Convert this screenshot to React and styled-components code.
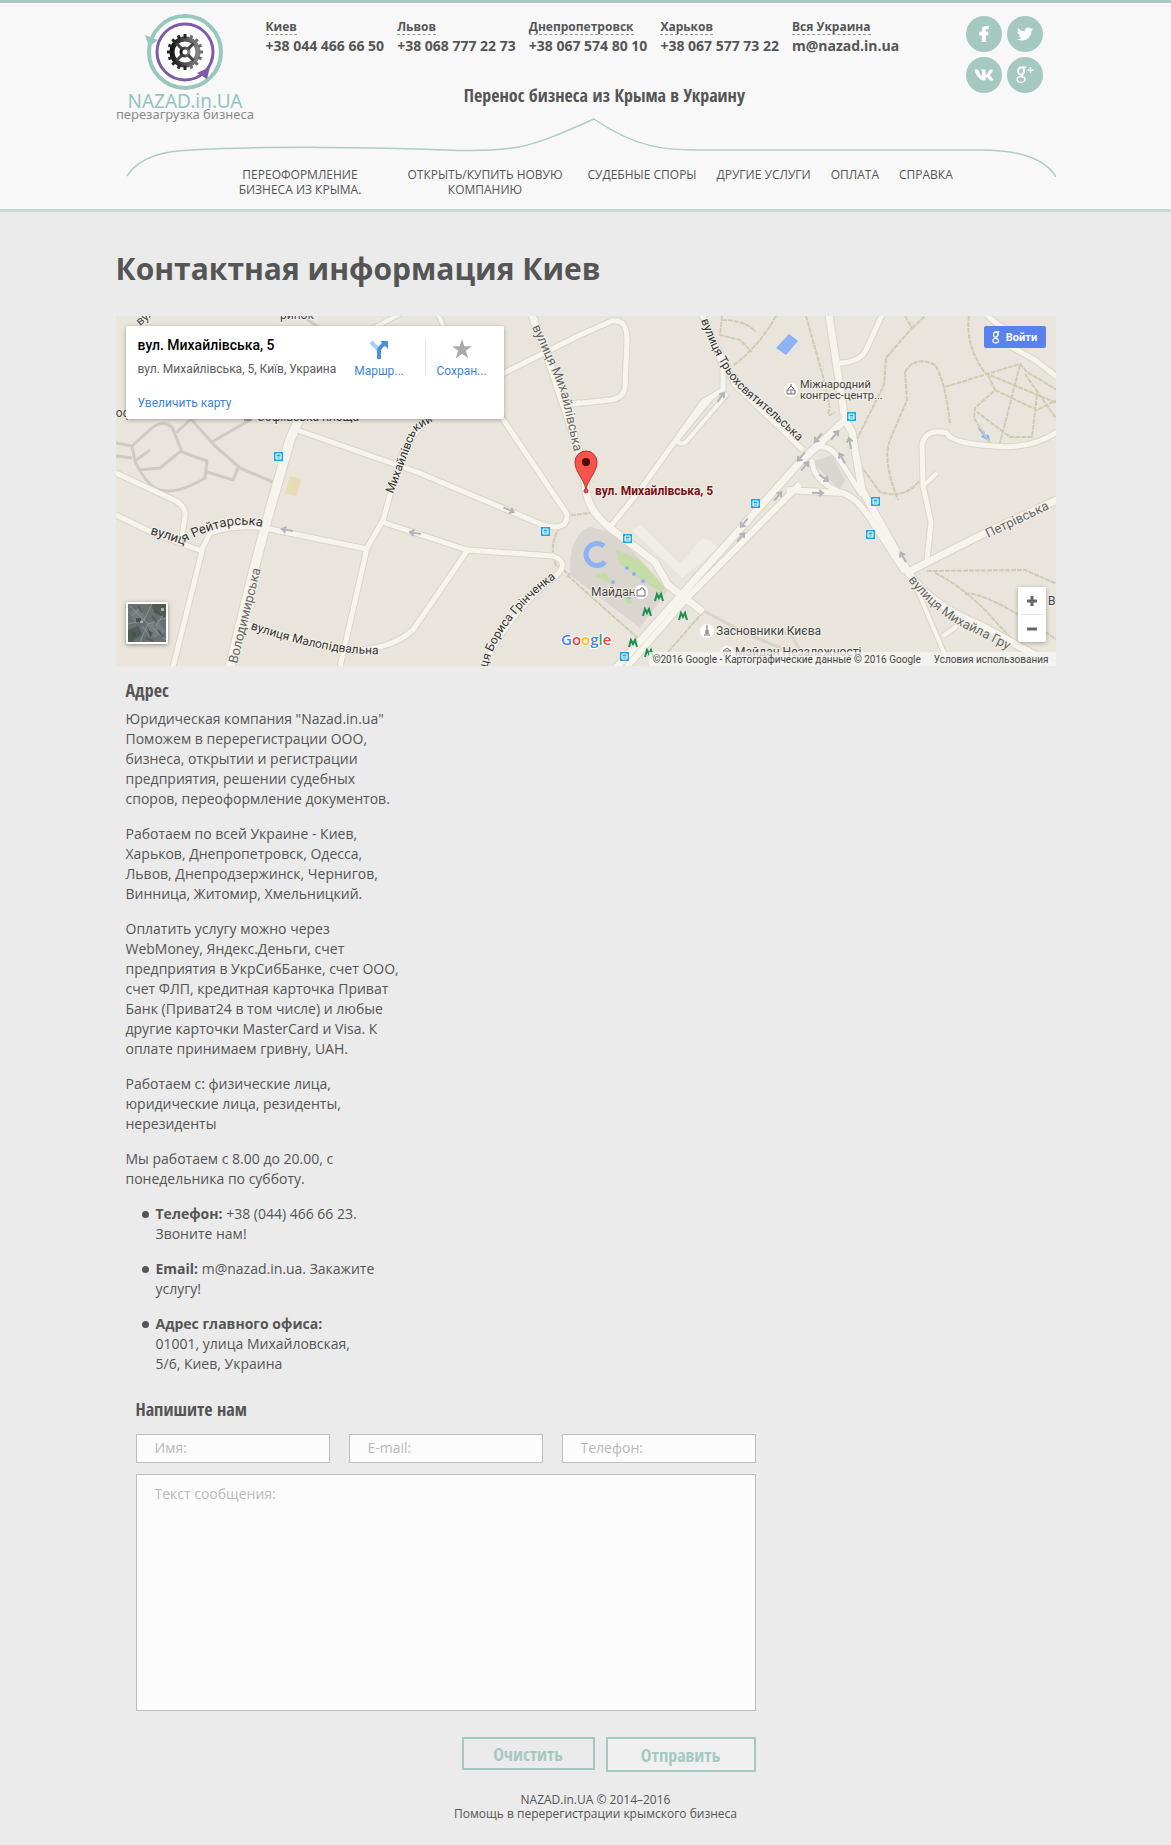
// React
import React, { useState } from 'react'

// npm packages
import styled, { createGlobalStyle, css } from 'styled-components'
import { FaFacebookF, FaTwitter, FaVk } from 'react-icons/fa'

const GlobalStyle = createGlobalStyle`
:root {
    --green: #a5c9c1;
    --text: #555;
    --page: #ebebeb;
    --sans: 'Open Sans', 'Noto Sans', sans-serif;
    --narrow: 'Open Sans Condensed', 'Liberation Sans Narrow', 'DejaVu Sans Condensed', 'Open Sans', sans-serif;
    --map: Roboto, 'Liberation Sans', sans-serif;
}
* {
    box-sizing: border-box;
}
body {
    margin: 0;
    background-color: var(--page);
    color: var(--text);
    font-family: var(--sans);
    font-size: 14px;
    line-height: 20px;
}
a {
    color: inherit;
    text-decoration: none;
}
h1, h2, p, ul {
    margin: 0;
    padding: 0;
}
`

const container = css`
width: 100%;
max-width: 940px;
margin: 0 auto;
`

const StyledHeader = styled.header`
border-top: 3px solid var(--green);
border-bottom: 3px solid #c8dad6;
background-color: #f8f8f8;
box-shadow: inset 0 2px #fff, inset 0 3px #ececec;
`
const Top = styled.div`
${container}
display: flex;
align-items: flex-start;
height: 114px;
padding: 10px 13px 0 3px;
`
const LogoLink = styled.a`
display: block;
flex: none;
width: 132px;

svg {
    display: block;
    width: 100%;
    overflow: visible;
}
`
const Middle = styled.div`
display: flex;
flex-direction: column;
align-items: center;
padding-left: 15px;
`
const Contacts = styled.ul`
display: flex;
gap: 13px;
list-style: none;
`
const Contact = styled.li`
font-size: 14px;
font-weight: 700;
white-space: nowrap;

span {
    display: table;
    border-bottom: 1px dashed #999;
    margin-top: 6px;
    font-size: 12px;
    line-height: 15px;
}
a {
    display: block;
    line-height: 22px;
}
`
const Tagline = styled.p`
margin-top: 26px;
padding-left: 44px;
font-family: var(--narrow);
font-size: 18px;
font-weight: 700;
line-height: 24px;
`
const Social = styled.div`
display: grid;
grid-template-columns: 36px 36px;
gap: 5px;
margin-left: auto;
padding-top: 3px;

a {
    display: flex;
    align-items: center;
    justify-content: center;
    height: 36px;
    border-radius: 50%;
    background-color: var(--green);
    color: #fff;
}
`
const Curve = styled.svg`
${container}
display: block;
height: 60px;
`
// The first line of the menu sits inside the ends of the curve
const Menu = styled.nav`
${container}
display: flex;
gap: 20px;
height: 42px;
margin-top: -10px;
padding-left: 102px;
font-size: 12px;
line-height: 15px;
text-align: center;
text-transform: uppercase;
white-space: nowrap;

a:hover {
    color: #7fb3a8;
}
`
const MenuLink = styled.a`
${({ $wide }) => $wide && css`
width: 165px;
padding: 0 4px;
white-space: normal;
`}
`

const Main = styled.main`
${container}
`
const Title = styled.h1`
padding: 37px 0 27px;
font-size: 30px;
font-weight: 700;
line-height: 40px;
`
const MapBox = styled.section`
position: relative;
height: 350px;
overflow: hidden;
background-color: #e9e5dc;
font-family: var(--map);
`
const MapCanvas = styled.svg`
display: block;
width: 100%;
height: 100%;
`
const Card = styled.div`
position: absolute;
top: 10px;
left: 10px;
display: flex;
width: 378px;
height: 93px;
padding: 9px 0 0 12px;
border-radius: 2px;
background-color: #fff;
box-shadow: 0 1px 4px rgba(0, 0, 0, 0.3);
font-size: 12px;
white-space: nowrap;
`
const Place = styled.div`
display: flex;
flex-direction: column;
width: 216px;

strong {
    color: #000;
    font-size: 14px;
    font-weight: 500;
}
span {
    margin-top: 4px;
    color: #5b5b5b;
}
a {
    margin-top: 14px;
    color: #3f83d6;
}
`
const CardAction = styled.button`
display: flex;
flex-direction: column;
align-items: center;
width: 72px;
height: 36px;
margin-top: 4px;
padding: 0;
border: 0;
background: none;
color: #3f83d6;
font-family: var(--map);
font-size: 12px;
line-height: 20px;
cursor: pointer;

${({ $divided }) => $divided && css`
padding-right: 20px;
border-right: 1px solid #e5e5e5;
`}

svg {
    flex: none;
    width: 20px;
    height: 20px;
    margin-bottom: 2px;
}
`
const SignIn = styled.button`
position: absolute;
top: 10px;
right: 10px;
display: flex;
align-items: center;
justify-content: center;
gap: 6px;
width: 62px;
height: 22px;
padding: 0;
border: 0;
border-radius: 2px;
background-color: #5a82ee;
color: #fff;
font-family: var(--map);
font-size: 11px;
font-weight: 700;
cursor: pointer;
`
const Satellite = styled.button`
position: absolute;
bottom: 22px;
left: 10px;
width: 42px;
height: 42px;
padding: 0;
border: 2px solid #fff;
border-radius: 2px;
background: none;
box-shadow: 0 1px 4px rgba(0, 0, 0, 0.4);
cursor: pointer;

svg {
    display: block;
}
`
const Zoom = styled.div`
position: absolute;
right: 10px;
bottom: 24px;
width: 28px;
padding: 0 3px;
border-radius: 2px;
background-color: #fff;
box-shadow: 0 1px 4px rgba(0, 0, 0, 0.3);

button {
    display: flex;
    align-items: center;
    justify-content: center;
    width: 22px;
    height: 27px;
    padding: 0;
    border: 0;
    background: none;
    cursor: pointer;
}
button + button {
    height: 28px;
    border-top: 1px solid #e6e6e6;
}
`
const Copyright = styled.div`
position: absolute;
right: 0;
bottom: 0;
display: flex;
gap: 13px;
height: 14px;
padding: 0 7px 0 4px;
background-color: rgba(245, 245, 245, 0.75);
color: #444;
font-size: 10px;
line-height: 16px;
white-space: nowrap;
`

const SubTitle = styled.h2`
font-family: var(--narrow);
font-size: 18px;
font-weight: 700;
line-height: 24px;
`
const Address = styled.section`
display: flex;
flex-direction: column;
gap: 15px;
width: 275px;
margin-left: 10px;
padding-top: 12px;

h2 {
    margin-bottom: -8px;
}
ul {
    display: flex;
    flex-direction: column;
    gap: 15px;
    padding: 0 24px 0 30px;
    list-style: none;
}
li::before {
    content: '';
    float: left;
    width: 7px;
    height: 7px;
    margin: 7px 0 0 -14px;
    border-radius: 50%;
    background-color: var(--text);
}
`
const Form = styled.form`
display: grid;
grid-template-columns: repeat(3, 1fr);
column-gap: 19px;
row-gap: 11px;
width: 620px;
max-width: 100%;
margin-left: 20px;
padding-top: 23px;

h2 {
    grid-column: 1 / -1;
    margin-bottom: 2px;
}
`
const field = css`
width: 100%;
border: 1px solid #bfbfbf;
border-radius: 0;
background-color: #fcfcfc;
color: var(--text);
font-family: var(--sans);
font-size: 14px;
line-height: 20px;

&::placeholder {
    color: #b9b9b9;
    opacity: 1;
}
`
const Input = styled.input`
${field}
height: 29px;
padding: 0 18px 2px;
`
const TextArea = styled.textarea`
${field}
display: block;
grid-column: 1 / -1;
height: 237px;
padding: 9px 18px;
resize: none;
`
const Buttons = styled.div`
grid-column: 1 / -1;
display: flex;
align-items: flex-start;
justify-content: flex-end;
gap: 11px;
padding-top: 15px;
`
const Button = styled.button`
width: ${({ $primary }) => $primary ? '150px' : '133px'};
height: ${({ $primary }) => $primary ? '35px' : '33px'};
padding: 0;
border: 2px solid var(--green);
background-color: ${({ $primary }) => $primary ? '#f0f0f0' : 'transparent'};
color: var(--green);
font-family: var(--narrow);
font-size: 18px;
font-weight: 700;
cursor: pointer;
`
const Footer = styled.footer`
${container}
padding: 21px 0 24px 20px;
font-size: 12px;
line-height: 14px;
text-align: center;
`

const contacts = [
    { city: 'Киев', value: '+38 044 466 66 50', href: 'tel:+380444666650' },
    { city: 'Львов', value: '+38 068 777 22 73', href: 'tel:+380687772273' },
    { city: 'Днепропетровск', value: '+38 067 574 80 10', href: 'tel:+380675748010' },
    { city: 'Харьков', value: '+38 067 577 73 22', href: 'tel:+380675777322' },
    { city: 'Вся Украина', value: 'm@nazad.in.ua', href: 'mailto:m@nazad.in.ua' },
]

const menu = [
    { label: 'Переоформление бизнеса из Крыма.', wide: true },
    { label: 'Открыть/купить новую компанию', wide: true },
    { label: 'Судебные споры' },
    { label: 'Другие услуги' },
    { label: 'Оплата' },
    { label: 'Справка' },
]

// Old double-storey Google mark, with the plus for the social link
const GoogleG = ({ plus }) => (
    <svg width={plus ? 18 : 8} height={plus ? 18 : 13} viewBox={plus ? '0 0 18 18' : '0 0 11 18'} fill="none" stroke="currentColor" strokeWidth="1.6">
        <ellipse cx="5" cy="5" rx="2.9" ry="3.7" strokeWidth="1.8"/>
        <path d="M4.5 1.2H10.2M7.6 1.4C8.6 3.4 8.6 6 7 7.6 5.6 9 5.4 9.6 6.8 10.7"/>
        <ellipse cx="5" cy="13.4" rx="4" ry="3" strokeWidth="1.5"/>
        {plus ? <path d="M11.4 4.2H17.6M14.5 1.1V7.3" strokeWidth="1.3"/> : null}
    </svg>
)

const teeth = Array.from({ length: 16 }, (_, i) => i * 22.5)

const Logo = () => (
    <svg viewBox="0 0 132 112" role="img" aria-label="NAZAD.in.UA перезагрузка бизнеса">
        <defs>
            <linearGradient id="gear" x1="0" x2="1">
                <stop offset="0" stopColor="#151515"/>
                <stop offset="1" stopColor="#868686"/>
            </linearGradient>
        </defs>
        <circle cx="66" cy="39" r="36" fill="#fcfcfc" stroke="#98c8bd" strokeWidth="4"/>
        <circle cx="66" cy="39" r="28" fill="none" stroke="#7d5ba6" strokeWidth="3"/>
        <path d="M26 22L39 27 30 34Z" fill="#98c8bd"/>
        <path d="M78 60L91 54 88 66Z" fill="#7d5ba6"/>
        <g fill="none" stroke="url(#gear)">
            <circle cx="66" cy="39" r="13" strokeWidth="5"/>
            <circle cx="66" cy="39" r="4" strokeWidth="3"/>
        </g>
        <g>
            {teeth.map(a => (
                <rect key={a} x="64.5" y="21" width="3" height="4" fill={a > 10 && a < 170 ? '#6e6e6e' : '#262626'} transform={`rotate(${a} 66 39)`}/>
            ))}
            {[45, 135, 225, 315].map(a => (
                <rect key={a} x="64.5" y="27" width="3" height="8" fill="#444" transform={`rotate(${a} 66 39)`}/>
            ))}
        </g>
        <text x="66" y="95" textAnchor="middle" fontFamily="'Noto Sans', sans-serif" fontSize="19" fill="#93c6ba">NAZAD.in.UA</text>
        <text x="66" y="106" textAnchor="middle" fontFamily="'Noto Sans', sans-serif" fontSize="13" fill="#8a8a8a">перезагрузка бизнеса</text>
    </svg>
)

// Streets are drawn twice: a grey casing, then the light surface
const streets = [
    ['M302 412L290 440 267 520 253 573 230 667', 9],
    ['M116 473L176 501Q186 507 185 516L182 537', 5],
    ['M116 515L153 533 202 551 173 667', 5],
    ['M202 549L210 533Q235 524 265 528L367 549', 5],
    ['M297 430L417 472 543 525Q568 532 567 514L517 440 490 400', 5],
    ['M460 400Q415 420 400 460L383 520 367 548 340 667', 5],
    ['M382 522L467 550 553 556Q570 562 556 576 510 610 483 667', 5],
    ['M467 551L413 630Q390 650 352 650 300 645 247 624', 5],
    ['M532 315L552 370 582 460 586 490Q588 510 610 528L655 562 668 585 703 612', 7],
    ['M500 375L580 335 612 321Q627 318 627 340L625 385Q625 398 610 400L573 404', 5],
    ['M567 405L580 402M362 334L400 314M438 314L446 332', 4],
    ['M702 315L723 367 723 390 703 402 640 490 610 527', 5],
    ['M727 394L686 442Q680 446 677 440L712 397', 4],
    ['M702 315L735 385 803 450', 5],
    ['M829 315L845 420 800 462 617 667', 7],
    ['M845 420L852 432 862 490 908 572', 7],
    ['M800 484L687 598 627 667', 6],
    ['M787 490L843 493Q855 497 868 515L905 572', 6],
    ['M808 452Q825 440 837 456L862 495M812 460Q812 480 840 492', 5],
    ['M908 572L985 533 1057 500', 7],
    ['M908 572Q930 605 980 625L1057 667', 7],
    ['M927 560L931 522 923 486 922 445Q925 428 947 433 950 443 993 446 1030 450 1057 432', 5],
    ['M911 575L950 667M943 636L957 626M923 486L937 473', 4],
    ['M840 363Q860 362 866 350L882 315', 5],
    ['M987 315Q1000 328 1010 330L1008 345 1035 360 1057 377', 5],
]

const footpaths = [
    'M722 316L720 335 740 340 752 352M722 320Q745 320 756 332M776 316Q760 345 733 366',
    'M806 316L824 380 830 408Q825 420 835 412',
    'M905 316L912 328 886 358 884 385 855 443M912 328L925 316',
    'M905 372Q915 355 935 365 945 380 950 424M905 372L907 400 890 440Q882 460 898 500',
    'M969 316Q965 345 985 373M945 387L1000 370 1020 364 1027 372 1057 390',
    'M988 375L995 390 975 408 974 418 990 443M995 390L1037 410 1057 400M985 373L1057 403M1020 365L1000 443M1037 395L1032 437 1010 437 977 412M1025 374L1057 420',
    'M927 571L1025 570 1057 584M935 573Q960 585 985 610L1020 648M965 594Q985 590 1057 640M860 465L880 492Q905 500 920 480',
    'M567 575L640 640M560 527Q548 545 556 565L570 575M565 516L590 513M703 612L668 652',
]

const buses = [[278, 456], [545, 531], [627, 538], [755, 503], [851, 416], [875, 501], [870, 534], [624, 656]]
const metros = [[659, 597], [647, 612], [683, 616], [633, 643], [649, 653]]
const arrows = [[287, 530, 190], [415, 533, 190], [509, 510, 25], [721, 397, -55], [818, 438, 130], [835, 435, -50], [801, 457, 130], [805, 466, -50], [850, 443, -100], [842, 458, -120], [824, 478, 35], [818, 493, 3], [778, 496, -50], [744, 523, 130], [741, 537, -50], [903, 557, -120]]

const streetNames = [
    ['reit', 'M150 534L182 544Q198 534 220 528T262 527', 'вулиця Рейтарська', 13, '#333'],
    ['volod', 'M237 664L263 560', 'Володимирська', 13, '#666'],
    ['malo', 'M250 629Q330 656 382 654', 'вулиця Малопідвальна', 12, '#333'],
    ['bor', 'M487 668Q500 618 560 575', 'ця Бориса Грінченка', 12, '#333'],
    ['mykh', 'M393 494L416 432Q425 424 442 418', 'Михайлівський', 12, '#333'],
    ['mykhst', 'M532 327L560 390Q568 425 576 460', 'вулиця Михайлівська', 13, '#666'],
    ['tri', 'M701 320Q720 375 749 398T803 446', 'вулиця Трьохсвятительська', 12, '#333'],
    ['petr', 'M988 538L1060 504', 'Петрівська', 13, '#666'],
    ['hrush', 'M908 580Q935 615 970 631T1060 680', 'вулиця Михайла Гру', 13, '#666'],
]

const Label = styled.text`
font-family: var(--map);
fill: ${({ $color }) => $color || '#444'};
stroke: #f3f0e9;
stroke-width: 2px;
stroke-linejoin: round;
paint-order: stroke;
`

// Kyiv centre around Mykhailivska street
const CityMap = () => (
    <MapCanvas viewBox="116 316 940 350" preserveAspectRatio="xMidYMid slice" role="img" aria-label="Карта">
        <rect x="116" y="316" width="940" height="350" fill="#e9e5dc"/>
        <path d="M570 575Q568 535 590 527L616 533 668 590 640 628Z" fill="#dad6cf"/>
        <path d="M616 550L640 560 665 588 660 592 620 565ZM596 576L606 572 612 585ZM622 592L630 596 633 604 626 603Z" fill="#c6dca6"/>
        <path d="M632 530L641 525 680 564 702 538 711 541 718 548 682 578Z" fill="#f0ede5"/>
        <path d="M812 462L832 455 845 480 840 490Z" fill="#d9d5cf"/>
        <path d="M290 476L301 479 297 496 285 494Z" fill="#e8dcb5"/>
        <path d="M789 334L798 341 786 355 776 348ZM977 427L985 432 981 437 990 441 989 435 982 434Z" fill="#8db3f5"/>
        <g fill="none" stroke="#cfcbc1" strokeWidth="3">
            <path d="M116 443L132 446 153 427Q163 420 172 427L182 452 207 461 205 478Q175 496 157 489 145 483 135 461L132 446M135 461L150 450M138 470L160 468 182 450M207 472L233 480 238 468M190 418L215 446 240 468 273 482M176 433L190 420M210 443L250 420M116 456L132 458"/>
            <path d="M284 320Q292 314 305 318L320 328"/>
        </g>
        <path d="M704 611L745 633 790 652M745 633L790 633 800 650" fill="none" stroke="#d8d4ca" strokeWidth="3"/>
        <g fill="none" stroke="#cfccb6" strokeWidth="2" strokeDasharray="5 1">
            {footpaths.map(d => <path d={d} key={d}/>)}
        </g>
        <g fill="none" strokeLinejoin="round">
            {streets.map(([d, w]) => <path d={d} key={d} stroke="#d9d5ca" strokeWidth={w + 2}/>)}
            {streets.map(([d, w]) => <path d={d} key={d} stroke="#f6f4ed" strokeWidth={w}/>)}
        </g>
        <path d="M604 546A11 11 0 1 0 605 562" fill="none" stroke="#8db3f5" strokeWidth="5"/>
        <g fill="#8db3f5">
            {[[627, 568], [634, 574], [643, 581], [613, 582], [629, 597]].map(([x, y]) => <circle cx={x} cy={y} r="2" key={x}/>)}
        </g>
        <g fill="none" stroke="#b3b3b9" strokeWidth="2">
            {arrows.map(([x, y, a]) => <path key={`${x}-${y}`} d="M-6 0H5M1 -3L5 0 1 3" transform={`translate(${x} ${y}) rotate(${a})`}/>)}
        </g>
        {streetNames.map(([id, d, name, size, color]) => (
            <React.Fragment key={id}>
                <path id={id} d={d} fill="none"/>
                <Label $color={color} fontSize={size}><textPath href={`#${id}`}>{name}</textPath></Label>
            </React.Fragment>
        ))}
        <g fontSize="12">
            <Label x="140" y="326" transform="rotate(-40 140 326)">вул.</Label>
            <Label x="280" y="319">ринок</Label>
            <Label x="257" y="421">Софіївська площа</Label>
            <Label x="108" y="417">Соф</Label>
            <Label x="800" y="388" fontSize="11">Міжнародний</Label>
            <Label x="800" y="399" fontSize="11">конгрес-центр...</Label>
            <Label x="591" y="596">Майдан</Label>
            <Label x="716" y="635">Засновники Києва</Label>
            <Label x="735" y="656">Майдан Незалежності</Label>
            <Label x="1048" y="605">В</Label>
        </g>
        <g fill="#fff">
            <circle cx="791" cy="390" r="7"/>
            <circle cx="641" cy="592" r="7"/>
            <circle cx="707" cy="631" r="7"/>
            <circle cx="727" cy="653" r="7"/>
        </g>
        <g fill="none" stroke="#6b6b6b">
            <path d="M787 394V390H795V394ZM788 389L791 386 794 389M791 386V384M791 394V391"/>
            <path d="M637 590H640L641 588H643L644 590H645V596H637Z"/>
            <path d="M707 625V634M704 635H710M706 630V634M708 630V634"/>
            <path d="M723 651L727 648 731 651ZM724 652V657M727 652V657M730 652V657"/>
            <path d="M244 420H252M246 419V415H250V419"/>
        </g>
        {buses.map(([x, y]) => (
            <g key={x} transform={`translate(${x} ${y})`}>
                <rect x="-4" y="-4" width="9" height="9" fill="#1fa5e0"/>
                <path d="M-2 -2H3V3H-2ZM-2 1H3" fill="none" stroke="#fff"/>
            </g>
        ))}
        {metros.map(([x, y]) => (
            <path key={x} d="M-4 4L-2 -3 0 1 2 -3 4 4" transform={`translate(${x} ${y})`} fill="none" stroke="#1c9150" strokeWidth="2"/>
        ))}
        <path d="M586 490C584 478 575 473 575 462A11 11 0 0 1 597 462C597 473 588 478 586 490Z" fill="#f5534b" stroke="#b8342e"/>
        <circle cx="586" cy="462" r="4" fill="#4d0a0a"/>
        <circle cx="586" cy="491" r="2" fill="#f5534b" stroke="#b8342e"/>
        <Label x="595" y="495" fontSize="12" fontWeight="700" $color="#7b1113">вул. Михайлівська, 5</Label>
        <text x="561" y="645" fontFamily="'Open Sans', sans-serif" fontSize="15" fontWeight="600" stroke="#fff" strokeWidth="2" paintOrder="stroke">
            <tspan fill="#4285f4">G</tspan>
            <tspan fill="#ea4335">o</tspan>
            <tspan fill="#fbbc05">o</tspan>
            <tspan fill="#4285f4">g</tspan>
            <tspan fill="#34a853">l</tspan>
            <tspan fill="#ea4335">e</tspan>
        </text>
    </MapCanvas>
)

const SatelliteThumb = () => (
    <svg width="38" height="38" viewBox="0 0 38 38">
        <rect width="38" height="38" fill="#6a7071"/>
        <path d="M22 0H38V14L28 10ZM0 26L10 22 14 30 4 38H0Z" fill="#4d5d52"/>
        <path d="M0 8L12 4 18 14 8 20ZM18 20L30 16 38 28 26 34Z" fill="#767b7f"/>
        <path d="M2 2L16 16 38 36M0 20L16 16 24 0M12 38L20 20 38 14M28 22L34 12M4 12L10 6M22 32L14 22" fill="none" stroke="#8c9293"/>
        <path d="M8 14H13V18H8ZM26 6H30V9H26ZM20 26L25 29 22 33ZM4 28H8V32H4Z" fill="#4c4f54"/>
        <path d="M5 24L12 27M24 12L29 18M30 26L35 33M10 2L14 8M18 34L25 37" stroke="#585d60" strokeWidth="2"/>
        <path d="M33 4H36V7H33ZM12 17H15V19H12Z" fill="#b3aca6"/>
    </svg>
)

const ContactMap = () => {
    const [saved, setSaved] = useState(false)

    return (
        <MapBox>
            <CityMap/>
            <Card>
                <Place>
                    <strong>вул. Михайлівська, 5</strong>
                    <span>вул. Михайлівська, 5, Київ, Украина</span>
                    <a href="#map">Увеличить карту</a>
                </Place>
                <CardAction type="button" $divided>
                    <svg viewBox="0 0 20 20">
                        <path d="M2 3L10 11" stroke="#a9cbf3" strokeWidth="4"/>
                        <path d="M10 20V12Q10 9 15 5" fill="none" stroke="#4a8fe2" strokeWidth="4"/>
                        <path d="M11 2H19V10Z" fill="#4a8fe2"/>
                    </svg>
                    Маршр...
                </CardAction>
                <CardAction type="button" onClick={() => setSaved(saved => !saved)}>
                    <svg viewBox="0 0 20 20" fill={saved ? '#f2b600' : '#a9a9a9'}>
                        <path d="M10 0L12.300 7.300H20L13.800 11.800 16.200 19.200 10 14.700 3.800 19.200 6.200 11.800 0 7.300H7.700Z"/>
                    </svg>
                    Сохран...
                </CardAction>
            </Card>
            <SignIn type="button"><GoogleG/>Войти</SignIn>
            <Satellite type="button" aria-label="Спутник"><SatelliteThumb/></Satellite>
            <Zoom>
                <button type="button" aria-label="Увеличить">
                    <svg width="12" height="12" stroke="#666" strokeWidth="3"><path d="M1 6H11M6 1V11"/></svg>
                </button>
                <button type="button" aria-label="Уменьшить">
                    <svg width="12" height="12" stroke="#666" strokeWidth="3"><path d="M1 6H11"/></svg>
                </button>
            </Zoom>
            <Copyright>
                <span>©2016 Google - Картографические данные © 2016 Google</span>
                <a href="#terms">Условия использования</a>
            </Copyright>
        </MapBox>
    )
}

const App = () => (
    <>
    <GlobalStyle/>
    <StyledHeader>
        <Top>
            <LogoLink href="#home"><Logo/></LogoLink>
            <Middle>
                <Contacts>
                    {contacts.map(c => (
                        <Contact key={c.city}>
                            <span>{c.city}</span>
                            <a href={c.href}>{c.value}</a>
                        </Contact>
                    ))}
                </Contacts>
                <Tagline>Перенос бизнеса из Крыма в Украину</Tagline>
            </Middle>
            <Social>
                <a href="#facebook" aria-label="Facebook"><FaFacebookF size={16} stroke="#fff" strokeWidth={30}/></a>
                <a href="#twitter" aria-label="Twitter"><FaTwitter size={16}/></a>
                <a href="#vk" aria-label="VK"><FaVk size={20}/></a>
                <a href="#google" aria-label="Google+"><GoogleG plus/></a>
            </Social>
        </Top>
        <Curve viewBox="0 0 940 60" preserveAspectRatio="none" fill="none" stroke="#aecdc6" strokeWidth="1.5" aria-hidden="true">
            <path d="M11 59C24 38 52 34 75 33 150 29 260 30 330 33 400 36 415 30 478 2 520 31 550 33 580 33H865C900 33 928 40 940 60"/>
        </Curve>
        <Menu>
            {menu.map(m => <MenuLink href="#menu" key={m.label} $wide={m.wide}>{m.label}</MenuLink>)}
        </Menu>
    </StyledHeader>
    <Main>
        <Title>Контактная информация Киев</Title>
        <ContactMap/>
        <Address>
            <SubTitle>Адрес</SubTitle>
            <p>Юридическая компания "Nazad.in.ua"<br/>Поможем в перерегистрации ООО, бизнеса, открытии и регистрации предприятия, решении судебных споров, переоформление документов.</p>
            <p>Работаем по всей Украине - Киев, Харьков, Днепропетровск, Одесса, Львов, Днепродзержинск, Чернигов, Винница, Житомир, Хмельницкий.</p>
            <p>Оплатить услугу можно через WebMoney, Яндекс.Деньги, счет предприятия в УкрСибБанке, счет ООО, счет ФЛП, кредитная карточка Приват Банк (Приват24 в том числе) и любые другие карточки MasterCard и Visa. К оплате принимаем гривну, UAH.</p>
            <p>Работаем с: физические лица, юридические лица, резиденты, нерезиденты</p>
            <p>Мы работаем с 8.00 до 20.00, с понедельника по субботу.</p>
            <ul>
                <li><b>Телефон:</b> +38 (044) 466 66 23. Звоните нам!</li>
                <li><b>Email:</b> m@nazad.in.ua. Закажите услугу!</li>
                <li><b>Адрес главного офиса:</b><br/>01001, улица Михайловская, 5/6, Киев, Украина</li>
            </ul>
        </Address>
        <Form onSubmit={e => e.preventDefault()}>
            <SubTitle>Напишите нам</SubTitle>
            <Input type="text" name="name" aria-label="Имя" placeholder="Имя:"/>
            <Input type="email" name="email" aria-label="E-mail" placeholder="E-mail:"/>
            <Input type="tel" name="phone" aria-label="Телефон" placeholder="Телефон:"/>
            <TextArea name="message" aria-label="Текст сообщения" placeholder="Текст сообщения:"/>
            <Buttons>
                <Button type="reset">Очистить</Button>
                <Button type="submit" $primary>Отправить</Button>
            </Buttons>
        </Form>
    </Main>
    <Footer>
        <p>NAZAD.in.UA © 2014–2016</p>
        <p>Помощь в перерегистрации крымского бизнеса</p>
    </Footer>
    </>
)

export default App
